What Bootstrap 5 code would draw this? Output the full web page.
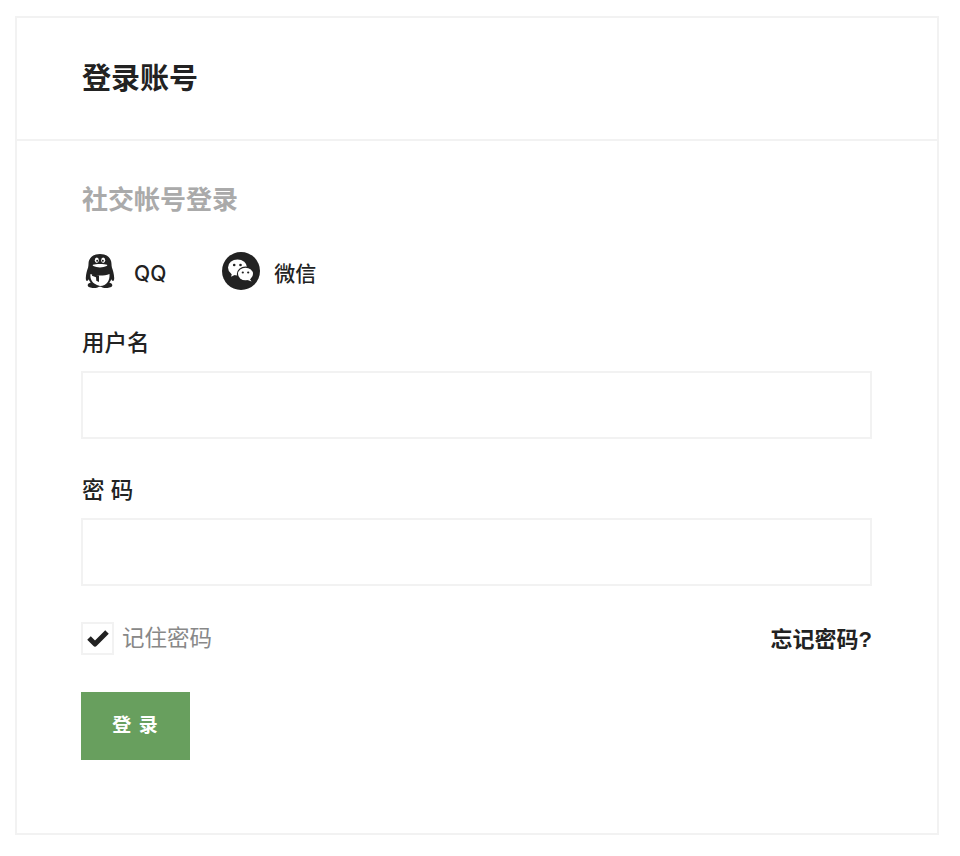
<!DOCTYPE html>
<html lang="zh-CN">
<head>
  <meta charset="UTF-8" />
  <meta name="viewport" content="width=device-width, initial-scale=1.0" />
  <title>登录账号</title>
  <link href="https://cdn.jsdelivr.net/npm/bootstrap@5.3.2/dist/css/bootstrap.min.css" rel="stylesheet" />
  <style>
    body {
      font-family: "Liberation Sans", "Noto Sans CJK SC", sans-serif;
      color: #222;
      background: #fff;
    }
    .login-wrap { padding: 16px 21px 21px 15px; }
    .login-card { border: 2px solid #f2f2f2; border-radius: 0; height: 819px; }
    .login-head {
      background: #fff;
      border-bottom: 2px solid #f2f2f2;
      border-radius: 0 !important;
      height: 123px;
      padding: 0 65px;
    }
    .login-head h1 { font-size: 29px; line-height: 40px; font-weight: 700; margin: 0; color: #222; }
    .login-body { padding: 41px 65px 0 64px; }
    .social-title { font-size: 26px; line-height: 36px; font-weight: 700; color: #aaa; margin: 0 0 34px 1px; }
    .social-row { gap: 56px; height: 38px; margin-bottom: 39px; }
    .social-link {
      color: #222;
      text-decoration: none;
      font-family: Inter, "Noto Sans CJK SC", sans-serif;
      font-size: 21px;
      font-weight: 500;
      line-height: 38px;
    }
    .social-link span { padding-top: 5px; }
    .qq-icon { width: 30px; height: 34px; margin: 0 19px 0 4px; }
    .wx-icon { width: 38px; height: 38px; margin-right: 14px; }
    .field-label { font-size: 22.5px; line-height: 30px; font-weight: 500; margin: 0 0 12px 1px; color: #222; }
    .field-input {
      height: 68px;
      border: 2px solid #f2f2f2;
      border-radius: 0;
      margin-bottom: 37px;
    }
    .field-input:focus { border-color: #ddd; box-shadow: none; }
    .remember-row { height: 34px; margin-top: -2px; margin-bottom: 37px; }
    .remember-box {
      width: 33px; height: 33px;
      border: 2px solid #f2f2f2;
      margin-right: 8px;
    }
    .remember-text { font-size: 22.5px; line-height: 32px; color: #888; padding-top: 1px; }
    .forgot-link { font-size: 22px; line-height: 32px; font-weight: 700; color: #222; text-decoration: none; padding-top: 4px; }
    .login-btn {
      width: 109px; height: 68px;
      background: #689f5e;
      border: 0;
      border-radius: 0;
      color: #fff;
      font-size: 19px;
      font-weight: 700;
      letter-spacing: 1px;
    }
    .login-btn:hover { background: #5d9054; color: #fff; }
  </style>
</head>
<body>
  <div class="login-wrap">
    <div class="card login-card">
      <div class="card-header login-head d-flex align-items-center">
        <h1>登录账号</h1>
      </div>
      <div class="card-body login-body">
        <h2 class="social-title">社交帐号登录</h2>
        <div class="d-flex align-items-center social-row">
          <a href="#" class="social-link d-flex align-items-center">
            <svg class="qq-icon" viewBox="0 0 30 34">
              <path fill="#222" d="M15 0C8 0 3.500 4 3.500 10c0 1-.1 2-.4 3.500C2 16 1 20 .8 24c-.1 2 .5 3 1.200 3 .6 0 1.200-.8 1.700-1.700.4 1.300 1 2.400 2 3.300-1.600.5-3 1.400-3 2.700 0 1.800 3 2.700 6 2.700 2.500 0 4.300-.5 5.300-1.300h2c1 .8 2.800 1.300 5.300 1.300 3 0 6-.9 6-2.700 0-1.300-1.400-2.200-3-2.700 1-.9 1.600-2 2-3.300.5.900 1.100 1.700 1.700 1.700.7 0 1.300-1 1.200-3-.2-4-1.200-8-2.300-10.500-.3-1.500-.4-2.500-.4-3.500C26.500 4 22 0 15 0z"/>
              <path fill="#fff" d="M5.500 20c-.6 4 .7 10 9.500 12 7 0 10-6 9.500-12-2.800 1-5.700 1.500-9.500 1.500S8 21 5.500 20z"/>
              <ellipse fill="#fff" cx="11.800" cy="6.300" rx="2" ry="2.700"/>
              <ellipse fill="#fff" cx="18.200" cy="6.300" rx="2" ry="2.700"/>
              <circle fill="#222" cx="12.200" cy="6.700" r="1"/>
              <circle fill="#222" cx="17.800" cy="6.700" r="1"/>
              <path fill="#fff" d="M8 10.800c2.500-1.200 11.500-1.200 14 0 .5.300.3 .9-.3 1.200-3.700 1.900-9.700 1.900-13.400 0-.6-.3-.8-.9-.3-1.200z"/>
              <path fill="#222" d="M7 20.300l7 1.300v6.400l-2.700-1.300-.3-3.500-4-1.500z"/>
            </svg>
            <span>QQ</span>
          </a>
          <a href="#" class="social-link d-flex align-items-center">
            <svg class="wx-icon" viewBox="0 0 38 38">
              <circle fill="#222" cx="19" cy="19" r="19"/>
              <ellipse fill="#fff" cx="15.500" cy="15.500" rx="9.500" ry="8"/>
              <path fill="#fff" d="M10 20.500l-.8 4.300 4.300-2.300z"/>
              <ellipse fill="#222" cx="23.500" cy="22" rx="8.700" ry="7.400"/>
              <ellipse fill="#fff" cx="23.500" cy="22" rx="7.500" ry="6.300"/>
              <path fill="#fff" d="M27.500 26.500l2 3-4-1.500z"/>
              <circle fill="#222" cx="12.200" cy="13" r="1.300"/>
              <circle fill="#222" cx="18.500" cy="13" r="1.300"/>
              <circle fill="#222" cx="20.800" cy="20.500" r="1.100"/>
              <circle fill="#222" cx="26.200" cy="20.500" r="1.100"/>
            </svg>
            <span>微信</span>
          </a>
        </div>
        <form>
          <label class="d-block field-label" for="username">用户名</label>
          <input class="form-control field-input" id="username" type="text" />
          <label class="d-block field-label" for="password">密 码</label>
          <input class="form-control field-input" id="password" type="password" />
          <div class="d-flex align-items-center justify-content-between remember-row">
            <div class="d-flex align-items-center">
              <span class="remember-box d-flex align-items-center justify-content-center">
                <svg width="24" height="20" viewBox="0 0 24 20"><path fill="none" stroke="#222" stroke-width="5" stroke-linejoin="round" d="M3 10l6 6L21 4"/></svg>
              </span>
              <span class="remember-text">记住密码</span>
            </div>
            <a href="#" class="forgot-link">忘记密码?</a>
          </div>
          <button type="button" class="btn login-btn">登 录</button>
        </form>
      </div>
    </div>
  </div>
  <script src="https://cdn.jsdelivr.net/npm/bootstrap@5.3.2/dist/js/bootstrap.bundle.min.js"></script>
</body>
</html>
